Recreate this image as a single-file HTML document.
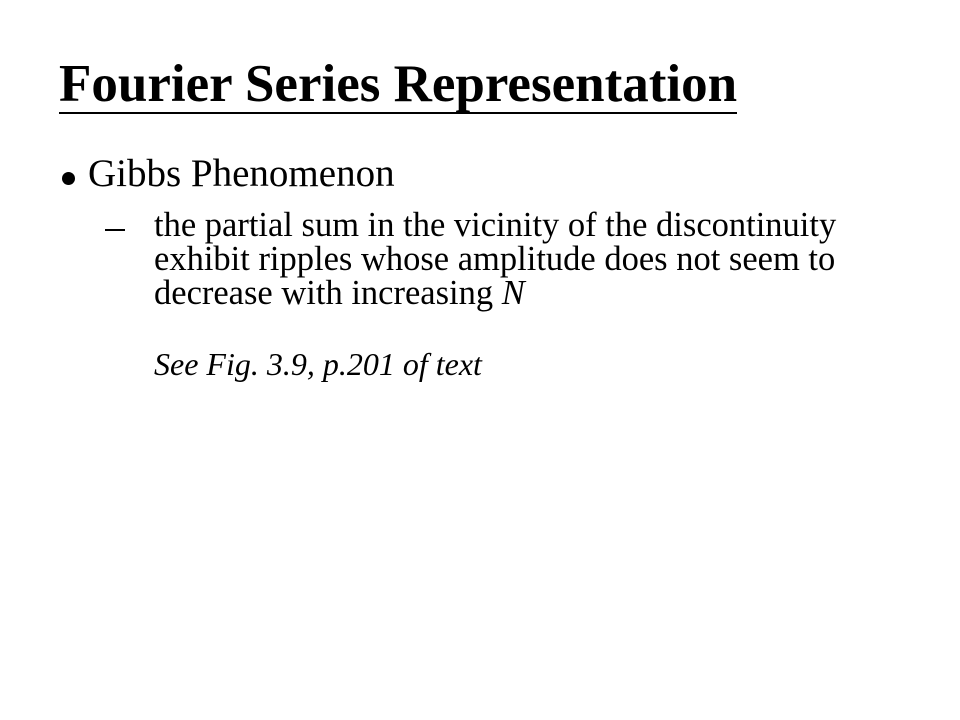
<!DOCTYPE html>
<html><head><style>
body{margin:0;width:960px;height:720px;background:#fff;font-family:"Liberation Serif",serif;color:#000;position:relative;overflow:hidden}
.t{position:absolute;left:59px;top:56px;font-size:53px;font-weight:bold;line-height:56px;white-space:nowrap;border-bottom:2px solid #000}
.b{position:absolute;left:62px;top:172px;width:13px;height:13px;border-radius:50%;background:#000}
.g{position:absolute;left:88px;top:152px;font-size:39px;line-height:44px;white-space:nowrap}
.d{position:absolute;left:105px;top:229px;width:20px;height:2px;background:#000}
.s{position:absolute;left:154px;top:208px;font-size:34.5px;line-height:34px;white-space:nowrap}
.f{position:absolute;left:154px;top:346px;font-size:32px;font-style:italic;white-space:nowrap;line-height:36px}
</style></head><body>
<div class="t">Fourier Series Representation</div>
<div class="b"></div>
<div class="g">Gibbs Phenomenon</div>
<div class="d"></div>
<div class="s">the partial sum in the vicinity of the discontinuity<br>exhibit ripples whose amplitude does not seem to<br>decrease with increasing <i>N</i></div>
<div class="f">See Fig. 3.9, p.201 of text</div>
</body></html>
